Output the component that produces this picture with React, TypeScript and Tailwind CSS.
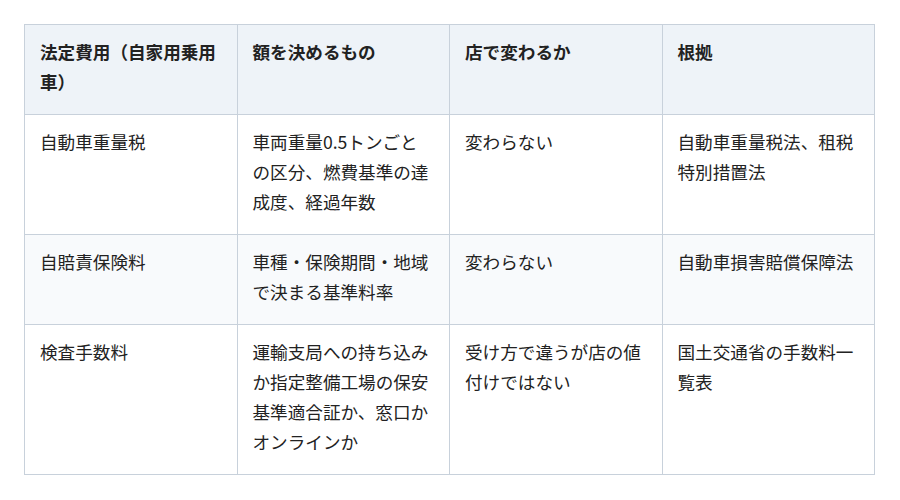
import React from "react";

const headers = ["法定費用（自家用乗用車）", "額を決めるもの", "店で変わるか", "根拠"];

const rows: string[][] = [
  [
    "自動車重量税",
    "車両重量0.5トンごとの区分、燃費基準の達成度、経過年数",
    "変わらない",
    "自動車重量税法、租税特別措置法",
  ],
  [
    "自賠責保険料",
    "車種・保険期間・地域で決まる基準料率",
    "変わらない",
    "自動車損害賠償保障法",
  ],
  [
    "検査手数料",
    "運輸支局への持ち込みか指定整備工場の保安基準適合証か、窓口かオンラインか",
    "受け方で違うが店の値付けではない",
    "国土交通省の手数料一覧表",
  ],
];

export default function App() {
  return (
    <div
      className="w-[900px] h-[500px] bg-white pt-[24px] pl-[24px]"
      style={{ fontFamily: '"Noto Sans CJK JP", "Noto Sans", sans-serif' }}
    >
      <table className="w-[851px] table-fixed border-collapse text-[17.6px] leading-[30px] text-[#222]">
        <thead>
          <tr className="bg-[#eef3f8]">
            {headers.map((h) => (
              <th
                key={h}
                className="border border-[#c8d1db] px-[15px] pt-[12px] pb-[17px] text-left align-top font-bold"
              >
                {h}
              </th>
            ))}
          </tr>
        </thead>
        <tbody>
          {rows.map((row, i) => (
            <tr key={i} className={i % 2 === 1 ? "bg-[#f8fafc]" : "bg-white"}>
              {row.map((cell, j) => (
                <td
                  key={j}
                  className="border border-[#c8d1db] px-[15px] pt-[12px] pb-[17px] align-top"
                >
                  {cell}
                </td>
              ))}
            </tr>
          ))}
        </tbody>
      </table>
    </div>
  );
}
